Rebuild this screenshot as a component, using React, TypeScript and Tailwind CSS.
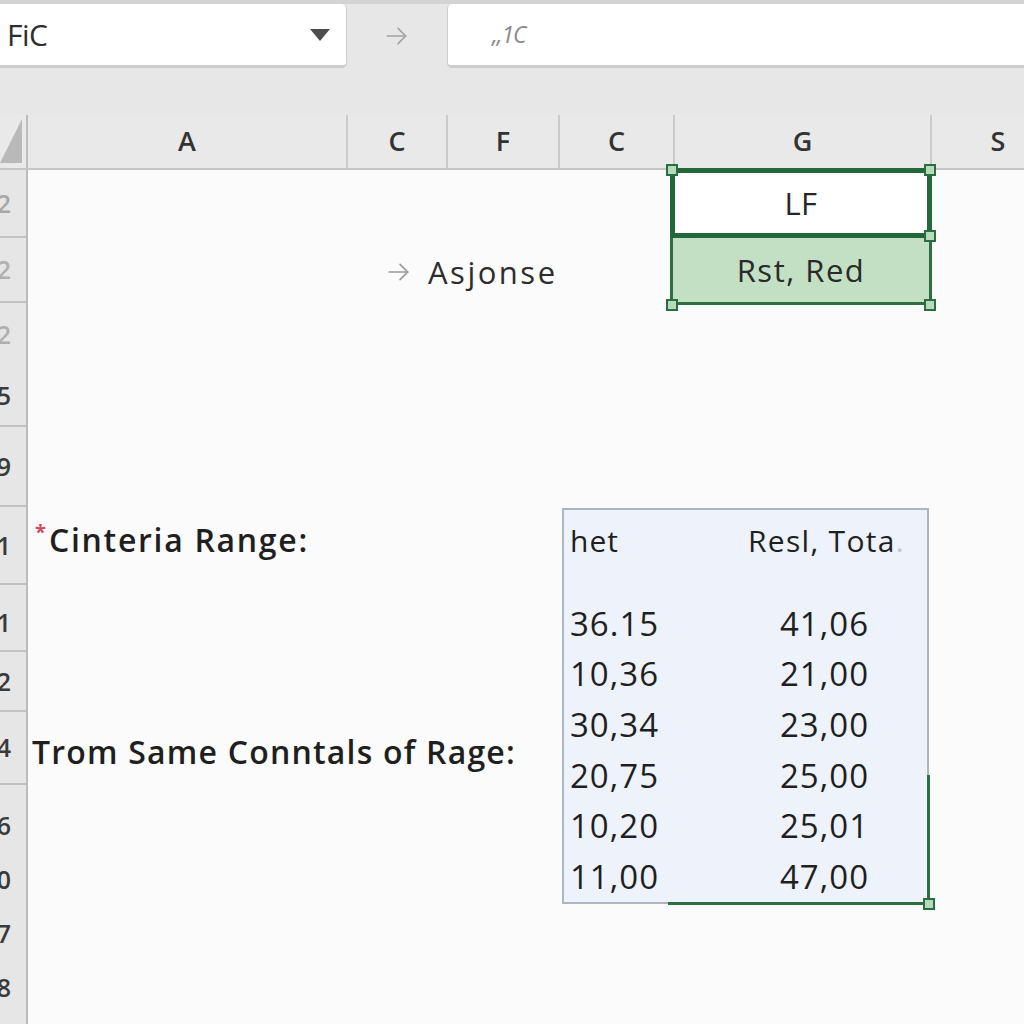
import React from "react";

function Arrow({ className }: { className?: string }) {
  return (
    <svg viewBox="0 0 24 24" className={className} fill="none" stroke="currentColor" strokeWidth={1.6} strokeLinecap="round" strokeLinejoin="round">
      <path d="M3 12h17" />
      <path d="M13 5l7 7-7 7" />
    </svg>
  );
}

function Handle({ className }: { className: string }) {
  return <div className={"absolute w-[12px] h-[12px] bg-[#b7d9bd] border-[2px] border-[#2c6d3e] " + className} />;
}

const rowLabel = "text-[25px] font-semibold leading-none whitespace-nowrap";

export default function App() {
  return (
    <div className="w-[1024px] h-[1024px] overflow-hidden bg-[#fbfbfb] font-['Open_Sans',sans-serif] flex flex-col text-[#262626]">
      {/* toolbar */}
      <div className="h-[115px] shrink-0 bg-[#e7e7e7] border-t-[4px] border-[#d3d3d3] flex items-start">
        <div className="w-[347px] h-[64px] bg-white rounded-r-[5px] border-b-[3px] border-r border-[#cdcdcd] flex items-center pl-[7px] pr-[16px]">
          <span className="text-[30px] font-medium text-[#2e2e2e] tracking-[-0.5px]">FiC</span>
          <svg viewBox="0 0 20 12" className="ml-auto w-[20px] h-[12px]">
            <polygon points="0,0 20,0 10,12" fill="#4d4d4d" />
          </svg>
        </div>
        <div className="w-[100px] h-[64px] flex items-center justify-center">
          <Arrow className="w-[26px] h-[26px] text-[#a3a3a3]" />
        </div>
        <div className="flex-1 h-[64px] bg-white rounded-l-[5px] border-b-[3px] border-l border-[#cdcdcd] flex items-center pl-[44px]">
          <span className="text-[23px] text-[#8a8a8a] italic tracking-[-1px]">,,1C</span>
        </div>
      </div>

      {/* column header */}
      <div className="h-[55px] shrink-0 bg-[#e9e9e9] flex border-b-[2px] border-[#c6c6c6] text-[27px] font-semibold text-[#333]">
        <div className="w-[28px] shrink-0 border-r-[2px] border-[#bdbdbd] flex items-end pb-[5px]">
          <svg viewBox="0 0 22 44" className="w-[22px] h-[44px]">
            <polygon points="22,0 22,44 0,44" fill="#b9b9b9" />
          </svg>
        </div>
        <div className="w-[320px] shrink-0 border-r-[2px] border-[#cbcbcb] flex items-center justify-center">A</div>
        <div className="w-[100px] shrink-0 border-r-[2px] border-[#cbcbcb] flex items-center justify-center">C</div>
        <div className="w-[112px] shrink-0 border-r-[2px] border-[#cbcbcb] flex items-center justify-center">F</div>
        <div className="w-[115px] shrink-0 border-r-[2px] border-[#cbcbcb] flex items-center justify-center">C</div>
        <div className="w-[257px] shrink-0 border-r-[2px] border-[#cbcbcb] flex items-center justify-center">G</div>
        <div className="w-[132px] shrink-0 flex items-center justify-center">S</div>
      </div>

      {/* body */}
      <div className="flex flex-1 min-h-0">
        {/* row header */}
        <div className="w-[28px] shrink-0 bg-[#e6e6e6] border-r-[2px] border-[#bcbcbc] flex flex-col overflow-hidden">
          <div className="h-[68px] border-b-[2px] border-[#c2c2c2] flex items-center justify-end pr-[15px]"><span className={rowLabel + " text-[#a8a8a8]"}>2</span></div>
          <div className="h-[65px] border-b-[2px] border-[#c2c2c2] flex items-center justify-end pr-[15px]"><span className={rowLabel + " text-[#b0b0b0]"}>2</span></div>
          <div className="h-[62px] flex items-center justify-end pr-[15px]"><span className={rowLabel + " text-[#b0b0b0]"}>2</span></div>
          <div className="h-[62px] border-b-[2px] border-[#c2c2c2] flex items-center justify-end pr-[15px]"><span className={rowLabel + " text-[#3a3a3a]"}>5</span></div>
          <div className="h-[80px] border-b-[2px] border-[#c2c2c2] flex items-center justify-end pr-[15px]"><span className={rowLabel + " text-[#3a3a3a]"}>9</span></div>
          <div className="h-[78px] border-b-[2px] border-[#c2c2c2] flex items-center justify-end pr-[15px]"><span className={rowLabel + " text-[#3a3a3a]"}>1</span></div>
          <div className="h-[67px] border-b-[2px] border-[#c2c2c2] flex items-center justify-end pr-[15px] pt-[10px]"><span className={rowLabel + " text-[#3a3a3a]"}>1</span></div>
          <div className="h-[60px] border-b-[2px] border-[#c2c2c2] flex items-center justify-end pr-[15px]"><span className={rowLabel + " text-[#3a3a3a]"}>2</span></div>
          <div className="h-[73px] border-b-[2px] border-[#c2c2c2] flex items-center justify-end pr-[15px]"><span className={rowLabel + " text-[#3a3a3a]"}>4</span></div>
          <div className="h-[13px] shrink-0" />
          <div className="h-[54px] shrink-0 flex items-center justify-end pr-[15px]"><span className={rowLabel + " text-[#3a3a3a]"}>6</span></div>
          <div className="h-[54px] shrink-0 flex items-center justify-end pr-[15px]"><span className={rowLabel + " text-[#3a3a3a]"}>0</span></div>
          <div className="h-[54px] shrink-0 flex items-center justify-end pr-[15px]"><span className={rowLabel + " text-[#3a3a3a]"}>7</span></div>
          <div className="h-[54px] shrink-0 flex items-center justify-end pr-[15px]"><span className={rowLabel + " text-[#3a3a3a]"}>8</span></div>
        </div>

        {/* sheet content */}
        <div className="flex-1 flex flex-col">
          <div className="flex">
            <div className="w-[642px] shrink-0 flex flex-col">
              <div className="h-[68px]" />
              <div className="h-[68px] flex items-center pl-[358px] gap-[16px]">
                <Arrow className="w-[26px] h-[26px] text-[#9a9a9a]" />
                <span className="text-[31px] text-[#2d2d2d] tracking-[2.5px]">Asjonse</span>
              </div>
            </div>
            <div className="relative w-[262px] shrink-0 flex flex-col -mt-[2px]">
              <div className="h-[70px] bg-white border-[5px] border-[#23683a] flex items-center justify-center">
                <span className="text-[31px] text-[#262626] tracking-[0.5px]">LF</span>
              </div>
              <div className="h-[67px] bg-[#c3e0c4] border-x-[3px] border-b-[3px] border-[#2e6f41] flex items-center justify-center">
                <span className="text-[31px] text-[#2a2a2a] tracking-[1.5px]">Rst, Red</span>
              </div>
              <Handle className="-top-[4px] -left-[4px]" />
              <Handle className="-top-[4px] -right-[4px]" />
              <Handle className="top-[62px] -right-[4px]" />
              <Handle className="-bottom-[5px] -left-[4px]" />
              <Handle className="-bottom-[5px] -right-[4px]" />
            </div>
          </div>

          <div className="mt-[202px] flex">
            <div className="w-[534px] shrink-0 flex flex-col">
              <div className="mt-[11px] h-[42px] flex items-center pl-[7px]">
                <span className="text-[20px] text-[#d4485e] self-start -mt-[2px] font-bold">*</span>
                <span className="ml-[3px] text-[32px] font-semibold text-[#1f1f1f] tracking-[1.7px]">Cinteria Range:</span>
              </div>
              <div className="mt-[170px] h-[42px] flex items-center pl-[4px]">
                <span className="text-[32px] font-semibold text-[#1f1f1f] tracking-[1.2px]">Trom Same Conntals of Rage:</span>
              </div>
            </div>

            <div className="relative w-[367px] h-[396px] shrink-0 bg-[#edf2fb] border-[2px] border-[#adb5c1] text-[33px] text-[#1f1f1f] leading-none">
              <div className="flex pt-[12px] h-[50px] items-center">
                <span className="w-[178px] pl-[6px] text-[30px] tracking-[1px]">het</span>
                <span className="pl-[6px] text-[30px] tracking-[1.3px]">Resl, Tota<span className="text-[#c0c4cc]">.</span></span>
              </div>
              <div className="mt-[38px] flex flex-col">
                {[
                  ["36.15", "41,06"],
                  ["10,36", "21,00"],
                  ["30,34", "23,00"],
                  ["20,75", "25,00"],
                  ["10,20", "25,01"],
                  ["11,00", "47,00"],
                ].map(([a, b]) => (
                  <div key={a + b} className="h-[50.6px] flex items-center">
                    <span className="w-[178px] pl-[6px] tracking-[1px]">{a}</span>
                    <span className="pl-[38px] tracking-[1px]">{b}</span>
                  </div>
                ))}
              </div>
              <div className="absolute -right-[3px] top-[265px] -bottom-[3px] w-[3px] bg-[#2e6f41]" />
              <div className="absolute left-[104px] -right-[3px] -bottom-[3px] h-[3px] bg-[#2e6f41]" />
              <Handle className="-bottom-[8px] -right-[8px]" />
            </div>
          </div>
        </div>
      </div>
    </div>
  );
}
